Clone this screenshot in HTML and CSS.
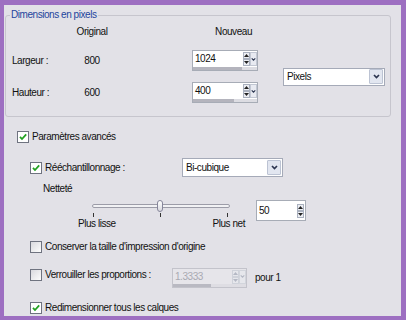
FILE: index.html
```html
<!DOCTYPE html>
<html lang="fr">
<head>
    <meta charset="UTF-8">
    <meta name="viewport" content="width=device-width, initial-scale=1.0">
    <title>Redimensionner</title>
    <link rel="stylesheet" href="styles.css">
</head>
<body>
<div class="frame">
    <fieldset class="group">
        <legend>Dimensions en pixels</legend>
        <div class="dims">
            <span class="head head-orig">Original</span>
            <span class="head head-new">Nouveau</span>

            <span class="dim-label row-w">Largeur :</span>
            <span class="dim-orig row-w">800</span>
            <div class="spin spin-dim row-w">
                <div class="spin-main">
                    <span class="spin-value">1024</span>
                    <span class="spin-arrows">
                        <span class="arrow"><svg width="5" height="3" viewBox="0 0 5 3"><path d="M0 3L2.5 0L5 3Z"/></svg></span>
                        <span class="arrow"><svg width="5" height="3" viewBox="0 0 5 3"><path d="M0 0L2.5 3L5 0Z"/></svg></span>
                    </span>
                    <span class="spin-drop"><svg width="7" height="5" viewBox="0 0 7 5"><path d="M1 1L3.5 3.5L6 1" fill="none" stroke="#2c3550" stroke-width="1.6"/></svg></span>
                </div>
                <div class="spin-bar"><div class="spin-fill" style="width: 76%"></div></div>
            </div>

            <div class="combo combo-unit">
                <span class="combo-value">Pixels</span>
                <span class="combo-btn"><svg width="7" height="5" viewBox="0 0 7 5"><path d="M1 1L3.5 3.5L6 1" fill="none" stroke="#2c3550" stroke-width="1.7"/></svg></span>
            </div>

            <span class="dim-label row-h">Hauteur :</span>
            <span class="dim-orig row-h">600</span>
            <div class="spin spin-dim row-h">
                <div class="spin-main">
                    <span class="spin-value">400</span>
                    <span class="spin-arrows">
                        <span class="arrow"><svg width="5" height="3" viewBox="0 0 5 3"><path d="M0 3L2.5 0L5 3Z"/></svg></span>
                        <span class="arrow"><svg width="5" height="3" viewBox="0 0 5 3"><path d="M0 0L2.5 3L5 0Z"/></svg></span>
                    </span>
                    <span class="spin-drop"><svg width="7" height="5" viewBox="0 0 7 5"><path d="M1 1L3.5 3.5L6 1" fill="none" stroke="#2c3550" stroke-width="1.6"/></svg></span>
                </div>
                <div class="spin-bar"><div class="spin-fill" style="width: 64%"></div></div>
            </div>
        </div>
    </fieldset>

    <div class="advanced">
        <div class="opt row-main">
            <label class="check"><span class="box"><svg width="10" height="10" viewBox="0 0 10 10"><path d="M2 4.8L4 7L8.2 2.4" fill="none" stroke="#21a121" stroke-width="1.8"/></svg></span>Paramètres avancés</label>
        </div>

        <div class="sub">
            <div class="opt row-resample">
                <label class="check"><span class="box"><svg width="10" height="10" viewBox="0 0 10 10"><path d="M2 4.8L4 7L8.2 2.4" fill="none" stroke="#21a121" stroke-width="1.8"/></svg></span>Rééchantillonnage :</label>
                <div class="combo combo-method">
                    <span class="combo-value">Bi-cubique</span>
                    <span class="combo-btn"><svg width="7" height="5" viewBox="0 0 7 5"><path d="M1 1L3.5 3.5L6 1" fill="none" stroke="#2c3550" stroke-width="1.7"/></svg></span>
                </div>
            </div>

            <div class="row-sharp-title">Netteté</div>

            <div class="row-slider">
                <div class="slider">
                    <div class="slider-track">
                        <span class="groove"></span>
                        <span class="thumb"></span>
                    </div>
                    <div class="ticks"><i></i><i></i><i></i></div>
                    <div class="slider-labels"><span>Plus lisse</span><span>Plus net</span></div>
                </div>
                <div class="spin spin-sharp">
                    <div class="spin-main">
                        <span class="spin-value">50</span>
                        <span class="spin-arrows">
                            <span class="arrow"><svg width="5" height="3" viewBox="0 0 5 3"><path d="M0 3L2.5 0L5 3Z"/></svg></span>
                            <span class="arrow"><svg width="5" height="3" viewBox="0 0 5 3"><path d="M0 0L2.5 3L5 0Z"/></svg></span>
                        </span>
                    </div>
                </div>
            </div>

            <div class="opt row-keep">
                <label class="check"><span class="box box-off"></span>Conserver la taille d'impression d'origine</label>
            </div>

            <div class="opt row-lock">
                <label class="check"><span class="box box-off"></span>Verrouiller les proportions :</label>
                <div class="spin spin-ratio spin-off">
                    <div class="spin-main">
                        <span class="spin-value">1.3333</span>
                        <span class="spin-arrows">
                            <span class="arrow"><svg width="5" height="3" viewBox="0 0 5 3"><path d="M0 3L2.5 0L5 3Z"/></svg></span>
                            <span class="arrow"><svg width="5" height="3" viewBox="0 0 5 3"><path d="M0 0L2.5 3L5 0Z"/></svg></span>
                        </span>
                        <span class="spin-drop"><svg width="7" height="5" viewBox="0 0 7 5"><path d="M1 1L3.5 3.5L6 1" fill="none" stroke="#b4b8c4" stroke-width="1.6"/></svg></span>
                    </div>
                    <div class="spin-bar"><div class="spin-fill" style="width: 52%"></div></div>
                </div>
                <span class="ratio-unit">pour 1</span>
            </div>

            <div class="opt row-redim">
                <label class="check"><span class="box"><svg width="10" height="10" viewBox="0 0 10 10"><path d="M2 4.8L4 7L8.2 2.4" fill="none" stroke="#21a121" stroke-width="1.8"/></svg></span>Redimensionner tous les calques</label>
            </div>
        </div>
    </div>
</div>
</body>
</html>
```

FILE: styles.css
```css
* {
    box-sizing: border-box;
}
body {
    margin: 0;
    font-family: "Liberation Sans", Arial, sans-serif;
    font-size: 10px;
    line-height: 12px;
    letter-spacing: -0.45px;
    color: #111;
}
.frame {
    width: 406px;
    height: 320px;
    border-style: solid;
    border-color: #9d6fc1;
    border-width: 5px 5px 4px 4px;
    background: #e2e1e7;
    overflow: hidden;
}

/* group box */
.group {
    margin: 4px 10px 0 1px;
    padding: 5px 5px 13px 6px;
    border: 1px solid #c6c5cd;
    border-radius: 3px;
    min-width: 0;
}
.group legend {
    padding: 0 1px;
    margin-left: -2px;
    color: #23459d;
    line-height: 12px;
}
.dims {
    display: grid;
    grid-template-columns: 60px 40px 80px 66px 25px 102px;
    grid-template-rows: 13px 21px 21px;
    row-gap: 11px;
    align-items: center;
}
.head {
    grid-row: 1;
    align-self: start;
}
.head-orig {
    grid-column: 2;
    text-align: center;
}
.head-new {
    grid-column: 4;
    text-align: right;
    padding-right: 6px;
}
.row-w {
    grid-row: 2;
}
.row-h {
    grid-row: 3;
}
.dim-label {
    grid-column: 1;
}
.dim-orig {
    grid-column: 2;
    text-align: center;
}
.spin-dim {
    grid-column: 4;
}

/* spin boxes */
.spin {
    display: flex;
    flex-direction: column;
    border: 1px solid #a7acb6;
    background: #fff;
}
.spin-dim {
    width: 66px;
    height: 21px;
}
.spin-main {
    flex: 1;
    display: flex;
    align-items: center;
    min-height: 0;
}
.spin-value {
    flex: 1;
    padding-left: 2px;
}
.spin-arrows {
    display: flex;
    flex-direction: column;
}
.arrow {
    width: 7px;
    height: 7px;
    border: 1px solid #aab1bf;
    background: #eceef3;
    display: flex;
    align-items: center;
    justify-content: center;
}
.arrow svg {
    fill: #222;
}
.spin-drop {
    width: 7px;
    height: 14px;
    display: flex;
    align-items: center;
    justify-content: center;
    background: #e8eaf1;
    border: 1px solid #c2c7d3;
}
.spin-bar {
    height: 3px;
    background: #dcdce2;
}
.spin-fill {
    height: 100%;
    background: #b4b4bd;
}
.spin-sharp {
    width: 50px;
    height: 21px;
    margin-left: 11px;
}
.spin-sharp .spin-arrows {
    margin-right: 1px;
}
.spin-ratio {
    width: 75px;
    height: 20px;
}
.spin-off {
    background: #e6e5ea;
    border-color: #c3c3cb;
    color: #a9a9b2;
}
.spin-off .arrow {
    border-color: #cfd2da;
    background: #e6e7ec;
}
.spin-off .arrow svg {
    fill: #b4b8c4;
}
.spin-off .spin-drop {
    border-color: #d2d5dc;
    background: #e6e7ec;
}
.spin-off .spin-bar {
    background: #dedde3;
}
.spin-off .spin-fill {
    background: #b9b9c2;
}

/* combo boxes */
.combo {
    display: flex;
    align-items: center;
    border: 1px solid #a5aab8;
    background: #fff;
}
.combo-value {
    flex: 1;
    padding-left: 3px;
}
.combo-btn {
    width: 14px;
    height: 15px;
    margin-right: 1px;
    border: 1px solid #bcc3d3;
    border-radius: 1px;
    background: #e2e6f0;
    display: flex;
    align-items: center;
    justify-content: center;
}
.combo-unit {
    grid-column: 6;
    grid-row: 2 / 4;
    align-self: center;
    height: 18px;
}
.combo-method {
    width: 101px;
    height: 19px;
}

/* advanced options */
.advanced {
    padding-left: 13px;
}
.opt {
    display: flex;
    align-items: center;
}
.check {
    display: flex;
    align-items: center;
    gap: 3px;
}
.box {
    width: 12px;
    height: 12px;
    border: 1px solid #6f7380;
    background: #fff;
    display: flex;
    align-items: center;
    justify-content: center;
}
.box-off {
    background: linear-gradient(135deg, #d9d9de, #fdfdfd);
}
.row-main {
    margin-top: 12px;
    height: 16px;
}
.sub {
    margin-left: 13px;
}
.row-resample {
    margin-top: 13px;
    height: 19px;
}
.row-resample .check {
    width: 152px;
}
.row-sharp-title {
    margin-top: 6px;
    padding-left: 13px;
    height: 12px;
}
.row-slider {
    margin-top: 5px;
    display: flex;
    align-items: flex-start;
}

/* slider */
.slider {
    width: 167px;
    margin-left: 48px;
}
.slider-track {
    position: relative;
    height: 12px;
    padding: 4px 15px 0 14px;
}
.groove {
    display: block;
    height: 4px;
    border: 1px solid #9c9ca8;
    border-radius: 2px;
    background: #f1f1f4;
}
.thumb {
    position: absolute;
    left: 79px;
    top: 0;
    width: 6px;
    height: 12px;
    border: 1px solid #85859a;
    border-radius: 3px;
    background: linear-gradient(#ffffff, #d8d8de);
}
.ticks {
    margin-top: 1px;
    height: 4px;
    display: flex;
    justify-content: space-between;
    padding: 0 17px 0 15px;
}
.ticks i {
    width: 1px;
    height: 4px;
    background: #333;
}
.slider-labels {
    margin-top: 1px;
    display: flex;
    justify-content: space-between;
}

.row-keep {
    margin-top: 9px;
    height: 16px;
}
.row-lock {
    margin-top: 13px;
    height: 20px;
    align-items: flex-start;
}
.row-lock .check {
    width: 142px;
    margin-top: 1px;
}
.ratio-unit {
    margin-left: 8px;
    margin-top: 4px;
}
.row-redim {
    margin-top: 12px;
    height: 15px;
}
```
